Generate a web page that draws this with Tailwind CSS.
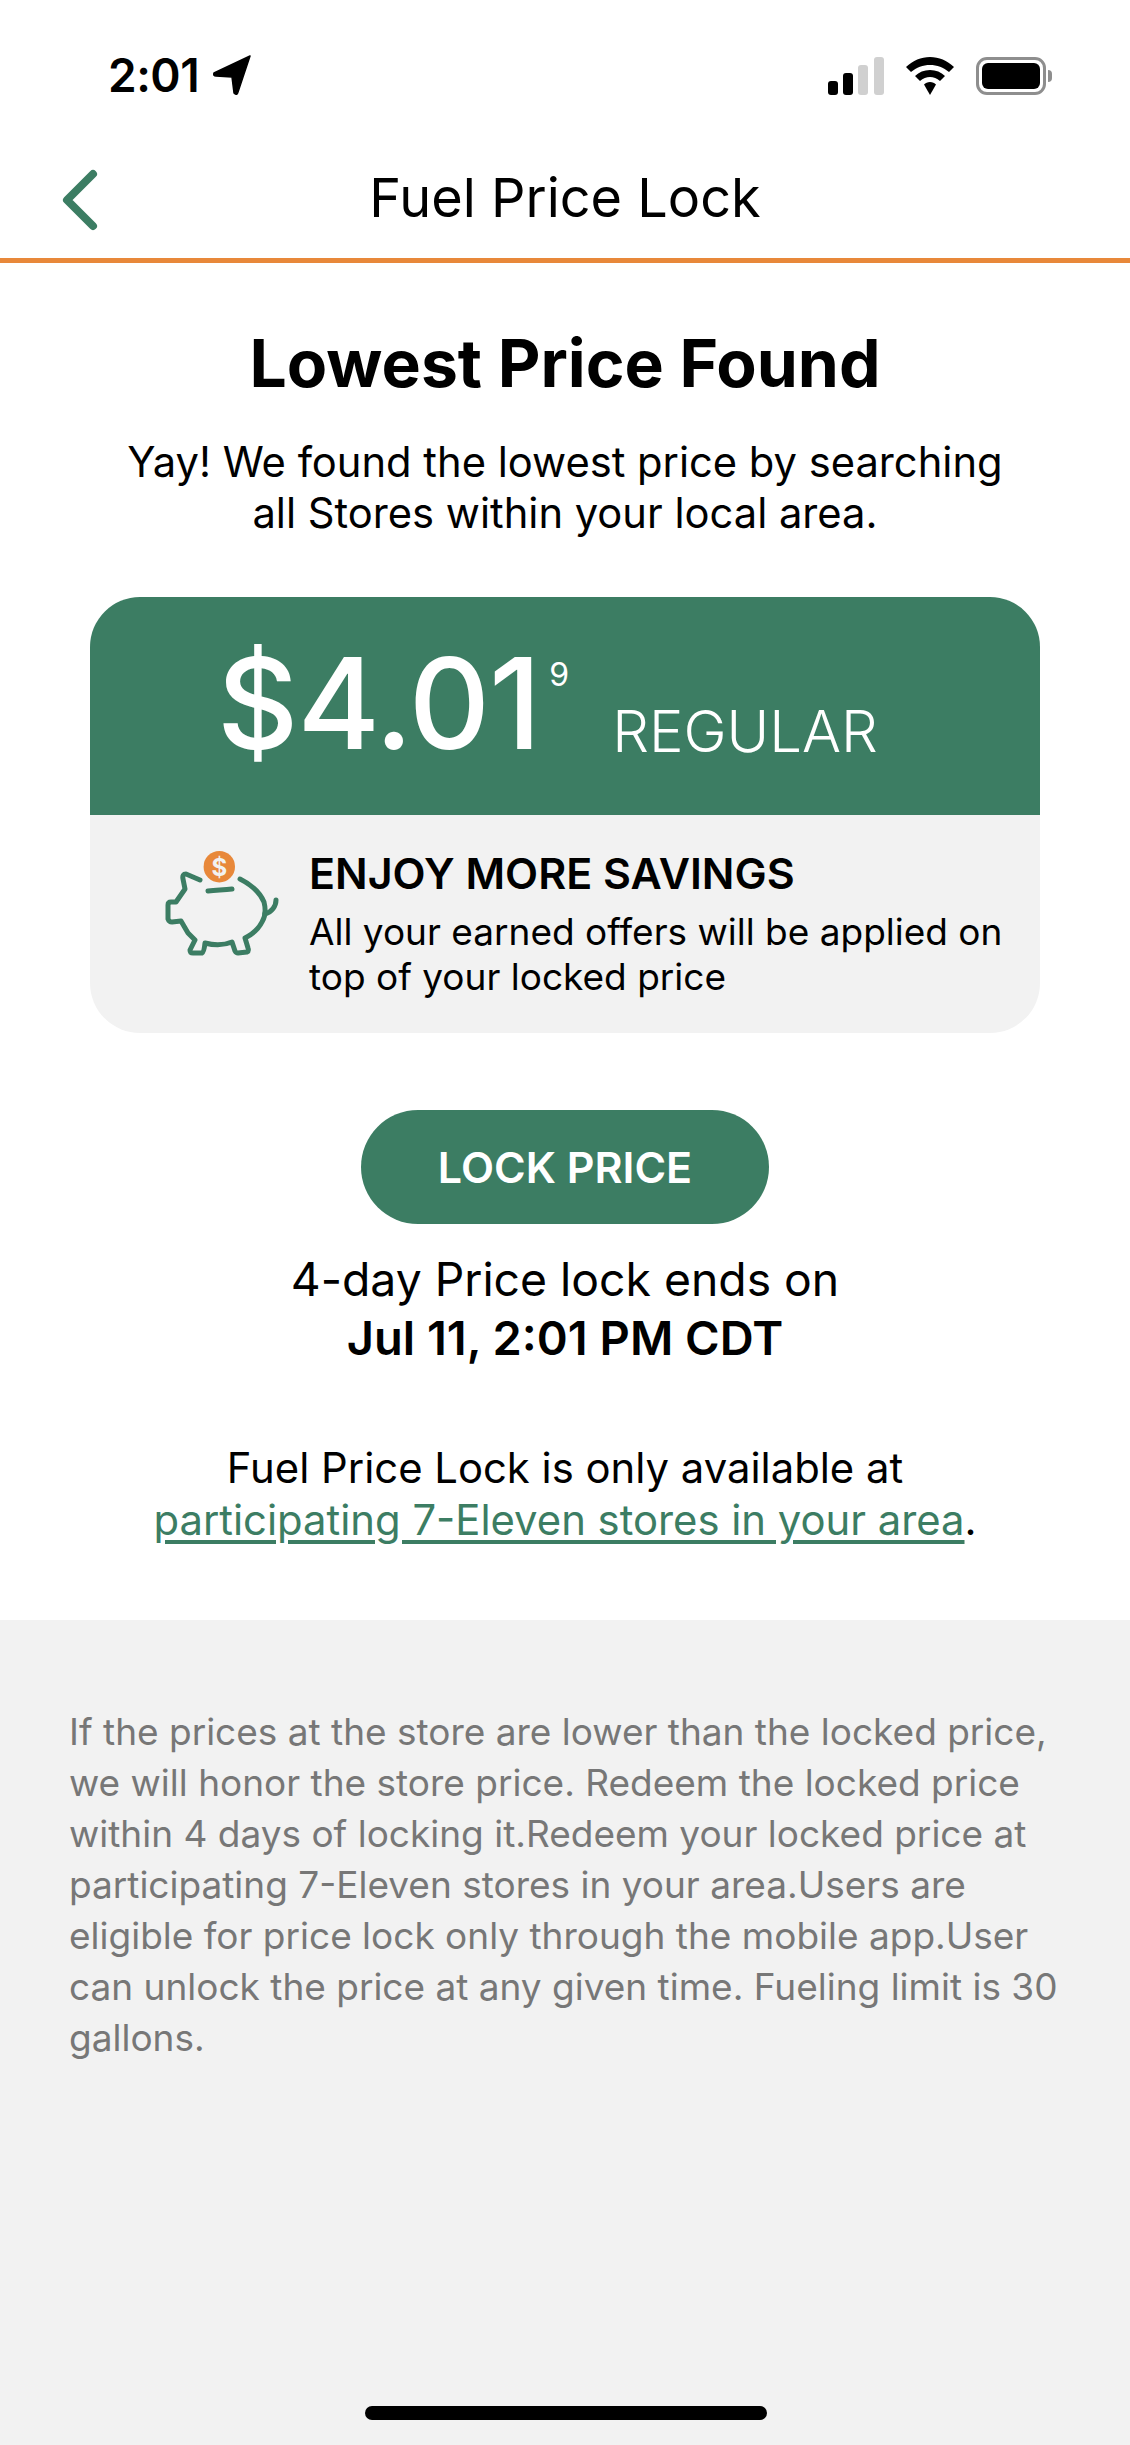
<!DOCTYPE html>
<html lang="en">
<head>
  <meta charset="UTF-8">
  <meta name="viewport" content="width=device-width, initial-scale=1.0">
  <title>Fuel Price Lock</title>
  <script src="https://cdn.jsdelivr.net/npm/@tailwindcss/browser@4"></script>
</head>
<body class="bg-white font-['Inter',sans-serif] text-black">
  <div class="relative w-[1130px] h-[2445px] flex flex-col overflow-hidden">
    <!-- Status bar -->
    <div class="h-[150px] flex items-start justify-between pt-[52px] pl-[108px] pr-[78px]">
      <div class="flex items-center gap-[14px]">
        <span class="text-[46px] leading-[46px] font-semibold tracking-[-0.5px]">2:01</span>
        <svg class="w-[38px] h-[40px]" viewBox="0 0 38 40"><path d="M37 1 L1 18 Q0 21 3 21 L19 22 L21 38 Q24 41 25 37 Z" fill="#000" stroke="#000" stroke-width="1.5" stroke-linejoin="round"/></svg>
      </div>
      <div class="flex items-center gap-[22px] pt-[5px]">
        <svg class="w-[56px] h-[38px]" viewBox="0 0 56 38">
          <rect x="0" y="24" width="10" height="14" rx="3" fill="#000"/>
          <rect x="15" y="16" width="10" height="22" rx="3" fill="#000"/>
          <rect x="30" y="8" width="10" height="30" rx="3" fill="#d0d0d0"/>
          <rect x="46" y="0" width="10" height="38" rx="3" fill="#d0d0d0"/>
        </svg>
        <svg class="w-[48px] h-[38px]" viewBox="0 0 48 38">
          <path d="M24 0 C15 0 7 3.500 0 10 L5 15 C10.500 10.500 17 8 24 8 C31 8 37.500 10.500 43 15 L48 10 C41 3.500 33 0 24 0 Z" fill="#000"/>
          <path d="M24 13 C18 13 13 15 9 19 L14 24 C17 21.500 20.500 20 24 20 C27.500 20 31 21.500 34 24 L39 19 C35 15 30 13 24 13 Z" fill="#000"/>
          <path d="M24 25 C21.500 25 19.500 26 18 27.500 L24 38 L30 27.500 C28.500 26 26.500 25 24 25 Z" fill="#000"/>
        </svg>
        <div class="flex items-center gap-[2px]">
          <div class="w-[70px] h-[38px] rounded-[11px] border-[3px] border-[#8e8e8e] p-[3px]">
            <div class="w-full h-full rounded-[6px] bg-black"></div>
          </div>
          <div class="w-[4px] h-[12px] rounded-r-full bg-[#8e8e8e]"></div>
        </div>
      </div>
    </div>

    <!-- Header -->
    <header class="relative h-[113px] flex items-center justify-center border-b-[5px] border-[#e8883a]">
      <svg class="absolute left-[60px] top-[19px] w-[40px] h-[62px]" viewBox="0 0 40 62" fill="none">
        <path d="M33 5 L7 31 L33 57" stroke="#3c7d63" stroke-width="8" stroke-linecap="round" stroke-linejoin="round"/>
      </svg>
      <h1 class="text-[54px] leading-[60px] font-normal pb-[12px]">Fuel Price Lock</h1>
    </header>

    <!-- Main -->
    <main class="flex flex-col items-center text-center h-[1357px]">
      <h2 class="mt-[60px] text-[66px] leading-[80px] font-bold">Lowest Price Found</h2>
      <p class="mt-[34px] text-[41.700px] leading-[51px]">Yay! We found the lowest price by searching<br>all Stores within your local area.</p>

      <div class="mt-[58px] w-[950px] h-[436px] rounded-[50px] overflow-hidden flex flex-col">
        <div class="h-[218px] bg-[#3c7d63] text-white flex items-start pl-[127px]">
          <span class="mt-[41px] text-[126px] leading-[130px] font-[450] tracking-[-1px]">$4.01</span>
          <span class="mt-[60px] ml-[9px] text-[32px] leading-[36px]">9</span>
          <span class="mt-[103px] ml-[43px] text-[58px] leading-[62px] font-[350]">REGULAR</span>
        </div>
        <div class="flex-1 bg-[#f2f2f2] flex items-start text-left pl-[50px]">
          <svg class="mt-[15px] w-[160px] h-[150px] shrink-0" viewBox="0 0 160 150" fill="none" stroke="#3c7d63" stroke-width="5" stroke-linecap="round" stroke-linejoin="round">
            <path d="M60 50 L46 44 Q42 44 43 49 L45 59 L36 72 L31 72 Q28 72 28 75 L28 89 Q29 92 32 92 L41 91 L48 103 L55 110 L50 120 Q50 123 53 123 L62 123 Q64 122 65 113 Q80 117 92 112 L95 121 Q96 123 98 123 L107 122 Q109 121 108 118 L105 108 Q117 102 122 92 Q127 84 124 72 Q118 58 100 49"/>
            <path d="M68 61 C78 60 84 60 92 59"/>
            <path d="M125 84 C132 82 136 76 136 70"/>
            <circle cx="79.300" cy="36.700" r="15.700" fill="#e8883a" stroke="none"/>
            <text x="79.300" y="45.500" text-anchor="middle" font-size="24" font-weight="700" fill="#f2f2f2" stroke="none">$</text>
          </svg>
          <div class="ml-[9px]">
            <div class="mt-[35px] text-[43px] leading-[46px] font-semibold">ENJOY MORE SAVINGS</div>
            <p class="mt-[13px] text-[37px] leading-[45px]">All your earned offers will be applied on<br>top of your locked price</p>
          </div>
        </div>
      </div>

      <button class="mt-[77px] w-[408px] h-[114px] rounded-full bg-[#3c7d63] text-white text-[43px] font-semibold">LOCK PRICE</button>

      <p class="mt-[27px] text-[46.300px] leading-[56px]">4-day Price lock ends on</p>
      <p class="mt-[3px] text-[47px] leading-[56px] font-semibold">Jul 11, 2:01 PM CDT</p>

      <p class="mt-[76px] text-[41.800px] leading-[52px]">Fuel Price Lock is only available at<br><a href="#" class="text-[#3c7d63] underline underline-offset-[5px]">participating 7-Eleven stores in your area</a>.</p>
    </main>

    <!-- Terms -->
    <section class="flex-1 bg-[#f2f2f2] pt-[86px] pl-[69px] pr-[40px]">
      <p class="text-[37px] leading-[51px] text-[#777777]">If the prices at the store are lower than the locked price,<br>we will honor the store price. Redeem the locked price<br>within 4 days of locking it.Redeem your locked price at<br>participating 7-Eleven stores in your area.Users are<br>eligible for price lock only through the mobile app.User<br>can unlock the price at any given time. Fueling limit is 30<br>gallons.</p>
    </section>

    <!-- Home indicator -->
    <div class="absolute left-[365px] bottom-[25px] w-[402px] h-[14px] rounded-full bg-black"></div>
  </div>
</body>
</html>
